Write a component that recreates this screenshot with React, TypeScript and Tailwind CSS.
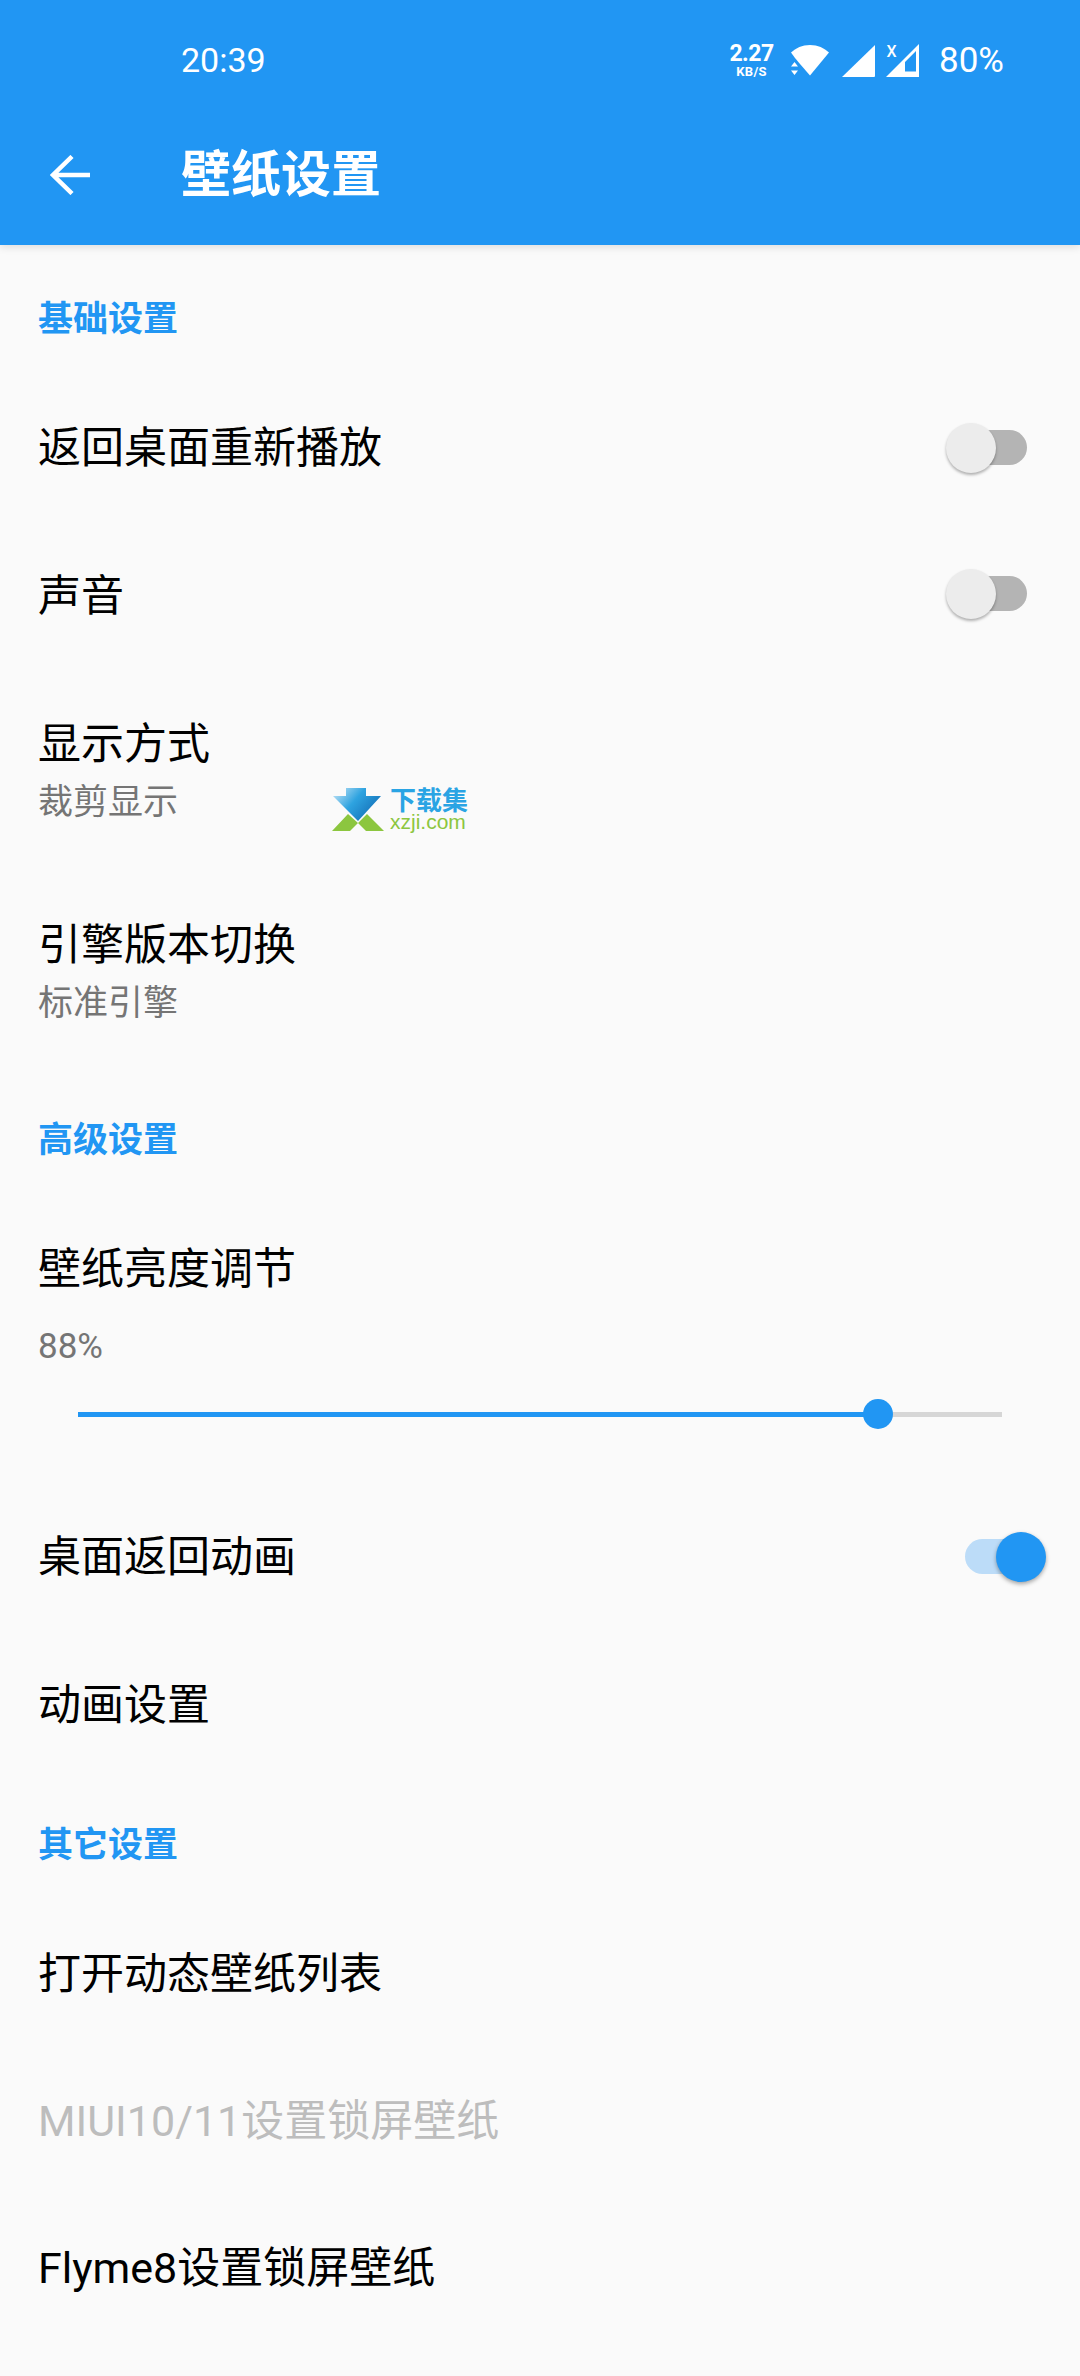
import React from "react";

function Section({ text, cls }: { text: string; cls: string }) {
  return (
    <div className={`flex items-center px-[38px] text-[35px] font-bold leading-none text-[#2196f3] ${cls}`}>
      {text}
    </div>
  );
}

function Toggle({ on, cls = "mb-[2px]" }: { on?: boolean; cls?: string }) {
  if (on) {
    return (
      <div className={`relative mr-[14px] h-[35px] w-[62px] rounded-full bg-[#bcdcf8] ${cls}`}>
        <div className="absolute right-[-19px] top-[-7px] h-[50px] w-[50px] rounded-full bg-[#2196f3] shadow-[0_2px_4px_rgba(0,0,0,0.35)]" />
      </div>
    );
  }
  return (
    <div className={`relative mr-[14px] h-[35px] w-[62px] rounded-full bg-[#b4b4b4] ${cls}`}>
      <div className="absolute left-[-19px] top-[-7px] h-[50px] w-[50px] rounded-full bg-[#ececec] shadow-[0_2px_3px_rgba(0,0,0,0.3)]" />
    </div>
  );
}

function Row({ text, sub, right, muted, cls = "h-[148px]" }: { text: string; sub?: string; right?: React.ReactNode; muted?: boolean; cls?: string }) {
  return (
    <div className={`flex items-center justify-between px-[39px] ${cls}`}>
      <div className="ml-[-1px] flex flex-col">
        <div className={`text-[43px] leading-[58px] ${muted ? "text-[#bdbdbd]" : "text-[#000000]"}`}>{text}</div>
        {sub && <div className="mt-[1px] text-[35px] leading-[58px] text-[#757575]">{sub}</div>}
      </div>
      {right}
    </div>
  );
}

function StatusIcons() {
  return (
    <div className="flex items-center text-white">
      <div className="mr-[19px] flex w-[41px] flex-col items-center font-bold">
        <span className="text-[23px] leading-[21px] tracking-[-0.5px]">2.27</span>
        <span className="mt-[1px] text-[13px] leading-[13px] tracking-[0.3px]">KB/S</span>
      </div>
      <svg width="38" height="31" viewBox="0 0 38 31" className="mr-[13px]" fill="#fff">
        <path d="M0 7.5C5 3 11 0 19 0s14 3 19 7.5L19 30.5 9 19 4 13z" />
        <path d="M0 21.5h7L3.5 17zM0 25.5h7L3.5 30z" />
      </svg>
      <svg width="33" height="33" viewBox="0 0 33 33" className="mr-[11px]" fill="#fff">
        <path d="M33 1v31a1 1 0 0 1-1 1H0z" />
      </svg>
      <svg width="33" height="33" viewBox="0 0 33 33" className="mr-[20px] overflow-visible" fill="#fff">
        <path fillRule="evenodd" d="M33 0v33H0zM30 7 19 18v9.5h11z" />
        <text x="0.5" y="13" fontSize="16" fontWeight="500" fill="#fff" fontFamily="Roboto">X</text>
      </svg>
      <span className="text-[35px] leading-none">80%</span>
    </div>
  );
}

function Watermark() {
  return (
    <div className="absolute left-[332px] top-[788px] flex items-start">
      <svg width="52" height="43" viewBox="0 0 52 43">
        <defs>
          <linearGradient id="g" x1="0" y1="0" x2="1" y2="0.6">
            <stop offset="0" stopColor="#cfe9f8" />
            <stop offset="0.5" stopColor="#2ea3e0" />
            <stop offset="1" stopColor="#1470b8" />
          </linearGradient>
        </defs>
        <path d="M1 8h13V0h20v8h15L26 33z" fill="url(#g)" />
        <path d="M0 43 16 26l10 9-8 8zM52 43H34l-8-8 9-9z" fill="#8cc63f" />
      </svg>
      <div className="ml-[6px] flex flex-col">
        <span className="text-[26px] font-bold leading-[26px] text-[#2aa4e4]">下载集</span>
        <span className="text-[21px] leading-[16px] text-[#8cc63f]" style={{ fontFamily: '"Liberation Sans", sans-serif' }}>xzji.com</span>
      </div>
    </div>
  );
}

export default function App() {
  return (
    <div className="relative h-[2376px] w-[1080px] overflow-hidden bg-[#fafafa] [font-family:Roboto,'Noto_Sans_CJK_SC',sans-serif]">
      <header className="relative z-10 h-[245px] bg-[#2196f3] text-white shadow-[0_2px_8px_rgba(0,0,0,0.12)]">
        <div className="flex h-[120px] items-center justify-between pl-[181px] pr-[76px]">
          <span className="text-[34px] leading-none">20:39</span>
          <StatusIcons />
        </div>
        <div className="flex h-[110px] items-center pl-[50px]">
          <svg width="40" height="40" viewBox="0 0 40 40" className="mr-[91px]" fill="none" stroke="#fff" strokeWidth="4.5">
            <path d="M40 20H3M22 1.5 3 20l19 18.5" />
          </svg>
          <div className="text-[50px] font-bold leading-[70px]">壁纸设置</div>
        </div>
      </header>

      <Section text="基础设置" cls="h-[148px]" />
      <div className="mt-[-19px]">
        <Row text="返回桌面重新播放" right={<Toggle />} />
        <Row text="声音" right={<Toggle cls="mb-[6px]" />} />
        <Row text="显示方式" sub="裁剪显示" cls="h-[203px] pt-[3px]" />
        <Row text="引擎版本切换" sub="标准引擎" cls="h-[203px]" />
      </div>

      <Section text="高级设置" cls="h-[128px]" />

      <div className="flex h-[279px] flex-col px-[38px] pt-[36px]">
        <div className="text-[43px] leading-[58px] text-[#000000]">壁纸亮度调节</div>
        <div className="mt-[29px] text-[35px] leading-[40px] text-[#757575]">88%</div>
        <div className="relative ml-[40px] mt-[45px] h-[5px] w-[924px] bg-[#d6d6d6]">
          <div className="h-full w-[800px] bg-[#2196f3]" />
          <div className="absolute left-[785px] top-[-13px] h-[30px] w-[30px] rounded-full bg-[#2196f3]" />
        </div>
      </div>

      <Row text="桌面返回动画" right={<Toggle on />} />
      <Row text="动画设置" />

      <Section text="其它设置" cls="h-[121px] pt-[11px]" />

      <Row text="打开动态壁纸列表" cls="h-[147px]" />
      <Row text="MIUI10/11设置锁屏壁纸" muted cls="h-[147px]" />
      <Row text="Flyme8设置锁屏壁纸" />

      <Watermark />
    </div>
  );
}
